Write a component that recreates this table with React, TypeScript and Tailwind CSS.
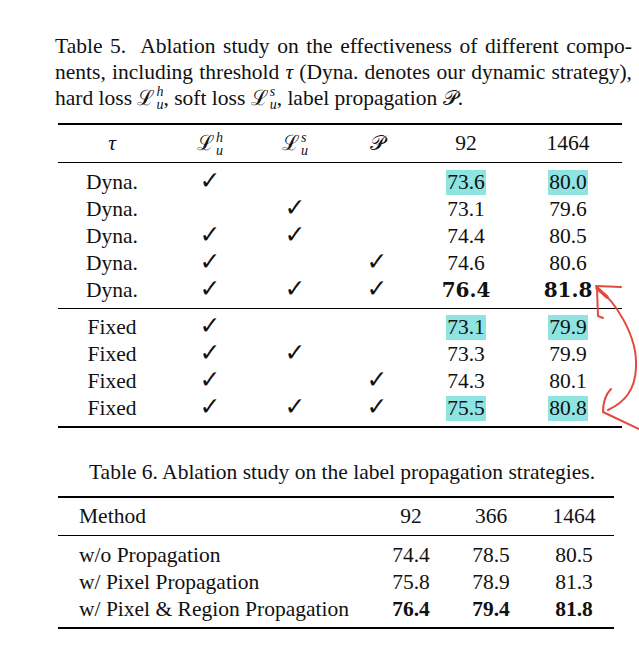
import React from "react";

const serif = { fontFamily: '"Liberation Serif", "DejaVu Serif", serif' };

function Lu({ sup }: { sup: string }) {
  return (
    <span className="inline-flex items-center">
      <span className="text-[21px]" style={{ fontFamily: '"DejaVu Serif", serif' }}>
        ℒ
      </span>
      <span className="flex flex-col text-[14px] italic leading-[13px] ml-[1px]">
        <span>{sup}</span>
        <span>u</span>
      </span>
    </span>
  );
}

function ScriptP() {
  return (
    <span className="text-[21px]" style={{ fontFamily: '"DejaVu Serif", "DejaVu Sans", serif' }}>
      𝒫
    </span>
  );
}

const Check = () => (
  <span className="text-[25px] font-bold leading-[27px]" style={{ fontFamily: '"DejaVu Sans", sans-serif' }}>
    ✓
  </span>
);

type Row = { tau: string; h: boolean; s: boolean; p: boolean; a: string; b: string; hl?: boolean; bold?: boolean };

const dyna: Row[] = [
  { tau: "Dyna.", h: true, s: false, p: false, a: "73.6", b: "80.0", hl: true },
  { tau: "Dyna.", h: false, s: true, p: false, a: "73.1", b: "79.6" },
  { tau: "Dyna.", h: true, s: true, p: false, a: "74.4", b: "80.5" },
  { tau: "Dyna.", h: true, s: false, p: true, a: "74.6", b: "80.6" },
  { tau: "Dyna.", h: true, s: true, p: true, a: "76.4", b: "81.8", bold: true },
];

const fixed: Row[] = [
  { tau: "Fixed", h: true, s: false, p: false, a: "73.1", b: "79.9", hl: true },
  { tau: "Fixed", h: true, s: true, p: false, a: "73.3", b: "79.9" },
  { tau: "Fixed", h: true, s: false, p: true, a: "74.3", b: "80.1" },
  { tau: "Fixed", h: true, s: true, p: true, a: "75.5", b: "80.8", hl: true },
];

const cols5 = "grid grid-cols-[108px_88px_82px_82px_96px_108px] items-center justify-items-center";

function Num({ v, hl, bold }: { v: string; hl?: boolean; bold?: boolean }) {
  if (bold) {
    return (
      <span className="font-bold text-[20px]" style={{ fontFamily: '"DejaVu Serif", serif' }}>
        {v}
      </span>
    );
  }
  return <span className={hl ? "bg-[#8ee4e0] px-[1px] leading-[25px]" : ""}>{v}</span>;
}

function Row5({ r }: { r: Row }) {
  return (
    <div className={`${cols5} h-[27px]`}>
      <span>{r.tau}</span>
      <span>{r.h ? <Check /> : null}</span>
      <span>{r.s ? <Check /> : null}</span>
      <span>{r.p ? <Check /> : null}</span>
      <Num v={r.a} hl={r.hl} bold={r.bold} />
      <Num v={r.b} hl={r.hl} bold={r.bold} />
    </div>
  );
}

const methods = [
  { m: "w/o Propagation", v: ["74.4", "78.5", "80.5"] },
  { m: "w/ Pixel Propagation", v: ["75.8", "78.9", "81.3"] },
  { m: "w/ Pixel & Region Propagation", v: ["76.4", "79.4", "81.8"], bold: true },
];

const cols6 = "grid grid-cols-[316px_74px_86px_80px] items-center";

export default function App() {
  return (
    <div className="relative w-[639px] h-[652px] bg-white text-[#111] overflow-hidden" style={serif}>
      <div className="pt-[33px] pl-[55px] w-[632px] text-[21.5px] leading-[26px]">
        <div className="text-justify [text-align-last:justify] whitespace-nowrap">
          Table 5.&nbsp; Ablation study on the effectiveness of different compo-
        </div>
        <div className="text-justify [text-align-last:justify] whitespace-nowrap">
          nents, including threshold <i>τ</i> (Dyna. denotes our dynamic strategy),
        </div>
        <div className="whitespace-nowrap flex items-center h-[26px]">
          <span>hard loss&nbsp;</span>
          <Lu sup="h" />
          <span>, soft loss&nbsp;</span>
          <Lu sup="s" />
          <span>, label propagation&nbsp;</span>
          <ScriptP />
          <span>.</span>
        </div>
      </div>

      <div className="mt-[12px] ml-[58px] w-[564px] text-[21.5px]">
        <div className="h-[2px] bg-black" />
        <div className={`${cols5} h-[37px]`}>
          <i>τ</i>
          <Lu sup="h" />
          <Lu sup="s" />
          <ScriptP />
          <span>92</span>
          <span>1464</span>
        </div>
        <div className="h-px bg-black" />
        <div className="pt-[3px] pb-[7px]">
          {dyna.map((r, i) => (
            <Row5 key={i} r={r} />
          ))}
        </div>
        <div className="h-px bg-black" />
        <div className="pt-[2px] pb-[7px]">
          {fixed.map((r, i) => (
            <Row5 key={i} r={r} />
          ))}
        </div>
        <div className="h-[2px] bg-black" />
      </div>

      <div className="mt-[31px] ml-[58px] w-[556px]">
        <div className="text-[21.5px] leading-[26px] text-center pl-[12px] whitespace-nowrap">
          Table 6. Ablation study on the label propagation strategies.
        </div>
        <div className="mt-[11px] h-[2px] bg-black" />
        <div className={`${cols6} h-[37px] text-[21.5px]`}>
          <span className="pl-[21px]">Method</span>
          <span className="text-center">92</span>
          <span className="text-center">366</span>
          <span className="text-center">1464</span>
        </div>
        <div className="h-px bg-black" />
        <div className="pt-[3px] pb-[7px] text-[21.5px]">
          {methods.map((r, i) => (
            <div key={i} className={`${cols6} h-[27px]`}>
              <span className="pl-[21px] whitespace-nowrap">{r.m}</span>
              {r.v.map((v, j) => (
                <span key={j} className={`text-center ${r.bold ? "font-bold" : ""}`}>
                  {v}
                </span>
              ))}
            </div>
          ))}
        </div>
        <div className="h-[2px] bg-black" />
      </div>

      <svg className="absolute left-0 top-0 pointer-events-none" width="639" height="652" viewBox="0 0 639 652">
        <g fill="none" stroke="#e5483c" strokeWidth="2" strokeLinecap="round" strokeLinejoin="round">
          <path d="M621 287 L596 286" />
          <path d="M597 288 L598 316 L603 318" />
          <path d="M597 288 L607 297" strokeWidth="3.5" />
          <path d="M597 288 C614 300 638 335 636 368 C635 390 625 402 608 410" />
          <path d="M611 389 C606 394 603 402 603 412" />
          <path d="M603 412 L639 429" />
        </g>
      </svg>
    </div>
  );
}
